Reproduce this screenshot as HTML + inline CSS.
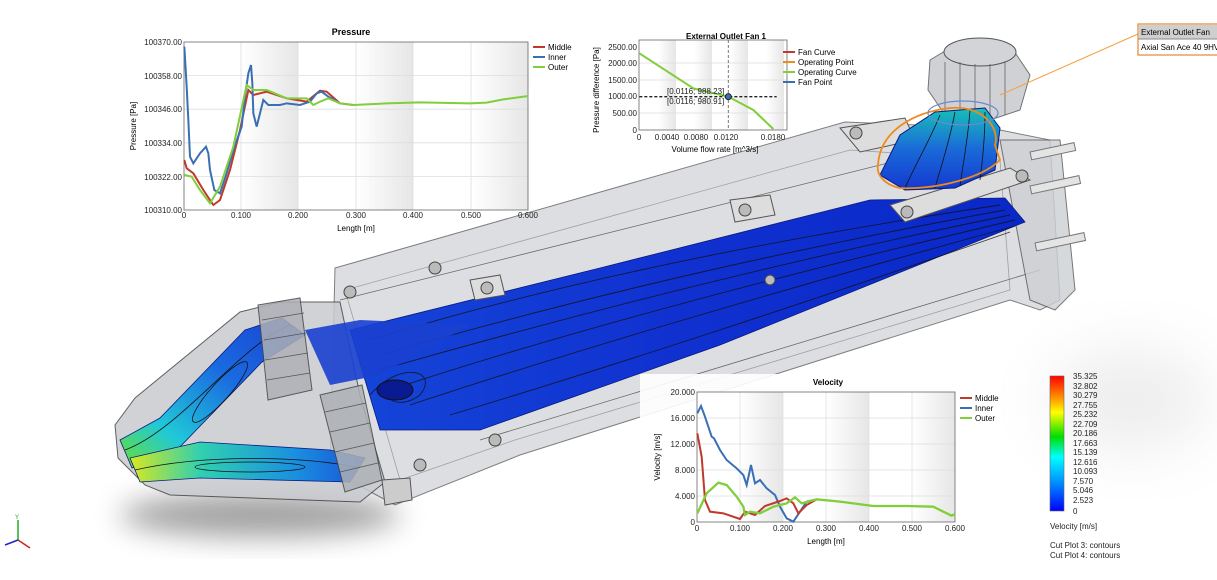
<!DOCTYPE html>
<html><head><meta charset="utf-8"><style>
html,body{margin:0;padding:0;background:#fff;}
body{width:1217px;height:575px;overflow:hidden;position:relative;font-family:"Liberation Sans",sans-serif;}
svg text{font-family:"Liberation Sans",sans-serif;}
</style></head><body>
<svg width="1217" height="575" viewBox="0 0 1217 575" xmlns="http://www.w3.org/2000/svg">
<defs>
<filter id="blur" x="-50%" y="-50%" width="200%" height="200%"><feGaussianBlur stdDeviation="14"/></filter>
<filter id="blur2" x="-50%" y="-50%" width="200%" height="200%"><feGaussianBlur stdDeviation="30"/></filter>
<linearGradient id="band" x1="0" x2="1" y1="0" y2="0"><stop offset="0" stop-color="#fff"/><stop offset="1" stop-color="#e6e6e6"/></linearGradient>
<linearGradient id="cbar" x1="0" x2="0" y1="0" y2="1">
<stop offset="0" stop-color="#f00"/><stop offset="0.15" stop-color="#f80"/><stop offset="0.27" stop-color="#ff0"/><stop offset="0.45" stop-color="#0d0"/><stop offset="0.6" stop-color="#0ff"/><stop offset="0.8" stop-color="#08f"/><stop offset="1" stop-color="#00f"/></linearGradient>
<linearGradient id="flow" x1="0" x2="1" y1="0" y2="0"><stop offset="0" stop-color="#1545d8"/><stop offset="0.5" stop-color="#1030d0"/><stop offset="1" stop-color="#0a28c8"/></linearGradient>
<linearGradient id="nose1" x1="0" x2="1" y1="1" y2="0"><stop offset="0" stop-color="#6be030"/><stop offset="0.25" stop-color="#20c8d8"/><stop offset="0.6" stop-color="#1a6ae0"/><stop offset="1" stop-color="#1840d0"/></linearGradient>
<linearGradient id="nose2" x1="0" x2="1" y1="0" y2="0"><stop offset="0" stop-color="#d8e820"/><stop offset="0.3" stop-color="#30d0b0"/><stop offset="0.7" stop-color="#1a90e0"/><stop offset="1" stop-color="#1850d8"/></linearGradient>
<linearGradient id="cone" x1="0" x2="0" y1="0" y2="1"><stop offset="0" stop-color="#18c0b8"/><stop offset="0.5" stop-color="#1a6ad8"/><stop offset="1" stop-color="#1438d0"/></linearGradient>
</defs>

<!-- shadows -->
<ellipse cx="260" cy="515" rx="140" ry="22" fill="#555" opacity="0.55" filter="url(#blur)"/>
<ellipse cx="1130" cy="400" rx="80" ry="50" fill="#ccc" opacity="0.35" filter="url(#blur2)"/>

<!-- main housing -->
<polygon points="335,268 845,122 990,128 1050,140 1060,300 1040,310 1010,300 520,455 395,505 330,470" fill="#d2d4d8" opacity="0.75" stroke="#555" stroke-width="1"/>
<polygon points="345,290 850,150 1000,160 1010,290 515,440 400,480" fill="#dcdee1" opacity="0.6" stroke="#777" stroke-width="0.8"/>
<line x1="340" y1="300" x2="1000" y2="135" stroke="#666" stroke-width="0.8"/>
<line x1="480" y1="440" x2="1040" y2="270" stroke="#666" stroke-width="0.8"/>
<polygon points="1000,140 1060,140 1075,290 1055,310 1030,300" fill="#cdd0d3" opacity="0.8" stroke="#555"/>
<!-- pins -->
<g stroke="#777" fill="#e4e4e4"><rect x="1030" y="152" width="45" height="8" transform="rotate(-12 1030 152)"/><rect x="1030" y="186" width="50" height="8" transform="rotate(-12 1030 186)"/><rect x="1035" y="243" width="50" height="8" transform="rotate(-12 1035 243)"/></g>
<!-- blue flow in housing -->
<polygon points="350,330 600,268 870,200 1005,198 1025,222 720,345 480,430 380,430" fill="url(#flow)" stroke="#0a1a80" stroke-width="0.8"/>
<g stroke="#111" stroke-width="0.9" fill="none" opacity="0.8">
<path d="M370,340 C500,300 700,250 1000,205"/><path d="M380,355 C520,315 720,262 1005,210"/><path d="M380,370 C520,330 740,270 1010,215"/><path d="M390,390 C540,340 760,280 1015,220"/><path d="M410,405 C560,355 780,290 1015,226"/><path d="M450,415 C600,370 800,305 1010,232"/><path d="M370,395 C400,360 440,370 420,395 C400,410 380,400 390,385"/>
</g>
<ellipse cx="395" cy="390" rx="18" ry="10" fill="#0a1a90" stroke="#111"/>
<!-- bolt plates -->
<g fill="#ddd" stroke="#555">
<polygon points="840,128 905,118 915,140 860,152"/><polygon points="890,205 1010,168 1030,180 905,222"/>
<polygon points="730,200 770,195 775,215 735,222"/>
<polygon points="470,280 500,275 505,295 475,300"/>
</g>
<g fill="#bbb" stroke="#444"><circle cx="856" cy="133" r="6"/><circle cx="907" cy="212" r="6"/><circle cx="1022" cy="176" r="6"/><circle cx="745" cy="210" r="6"/><circle cx="487" cy="288" r="6"/><circle cx="350" cy="292" r="6"/><circle cx="435" cy="268" r="6"/><circle cx="495" cy="440" r="6"/><circle cx="420" cy="465" r="6"/><circle cx="770" cy="280" r="5"/></g>
<!-- fan -->
<polygon points="930,60 960,42 1010,45 1030,75 1020,110 990,120 945,115 928,90" fill="#bfc2c7" opacity="0.75" stroke="#444"/>
<ellipse cx="980" cy="52" rx="36" ry="14" fill="#d2d4d8" stroke="#555"/>
<g stroke="#555" stroke-width="0.7"><line x1="945" y1="62" x2="945" y2="112"/><line x1="960" y1="62" x2="960" y2="116"/><line x1="975" y1="64" x2="975" y2="118"/><line x1="990" y1="64" x2="990" y2="118"/><line x1="1005" y1="62" x2="1005" y2="115"/></g>
<polygon points="880,175 900,135 935,112 985,108 1000,128 995,170 955,188 905,190" fill="url(#cone)" stroke="#0a1a80"/>
<g stroke="#111" stroke-width="0.8" fill="none"><path d="M940,115 C930,140 915,165 905,188"/><path d="M955,112 C950,140 940,170 935,188"/><path d="M970,110 C968,140 962,170 960,186"/><path d="M985,112 C985,140 982,165 980,180"/></g>
<path d="M878,165 C880,130 915,112 950,108 C985,105 1000,130 995,145 L1000,160 C980,180 930,190 900,188 C885,185 876,175 878,165 Z" fill="none" stroke="#f08a1a" stroke-width="1.8"/>
<ellipse cx="963" cy="113" rx="35" ry="12" fill="none" stroke="#6a8ad0" stroke-width="1.2"/>
<line x1="1000" y1="95" x2="1138" y2="34" stroke="#f5a040" stroke-width="1"/>

<!-- nose -->
<polygon points="115,425 135,398 240,312 280,302 340,302 360,395 385,482 360,502 170,495 145,485 118,458" fill="#c9cbd0" opacity="0.85" stroke="#444"/>
<polygon points="120,440 160,418 245,330 282,318 305,335 262,362 175,452 132,468" fill="url(#nose1)" stroke="#0a1a80" stroke-width="0.8"/>
<polygon points="130,458 200,442 330,450 365,458 350,482 200,478 140,482" fill="url(#nose2)" stroke="#0a1a80" stroke-width="0.8"/>
<g stroke="#111" fill="none" stroke-width="0.8"><ellipse cx="220" cy="392" rx="40" ry="9" transform="rotate(-48 220 392)"/><ellipse cx="250" cy="467" rx="55" ry="5"/><path d="M125,450 C180,430 240,345 290,325"/><path d="M135,470 C200,455 300,455 360,468"/></g>
<polygon points="305,330 360,320 470,325 380,375 330,385" fill="#1a40d0" opacity="0.9"/>
<!-- fan rings -->
<g fill="#aeb1b6" stroke="#444" opacity="0.85">
<polygon points="258,305 300,298 312,390 268,400"/>
<polygon points="320,395 362,385 382,480 345,492"/>
</g>
<g stroke="#555" stroke-width="0.7"><line x1="262" y1="320" x2="304" y2="313"/><line x1="264" y1="340" x2="306" y2="333"/><line x1="265" y1="360" x2="308" y2="353"/><line x1="267" y1="380" x2="310" y2="373"/><line x1="325" y1="412" x2="366" y2="403"/><line x1="330" y1="432" x2="370" y2="423"/><line x1="335" y1="452" x2="374" y2="443"/><line x1="340" y1="472" x2="378" y2="463"/></g>
<polygon points="382,480 410,478 412,500 385,505" fill="#ccc" stroke="#555"/>

<!-- triad -->
<g stroke-width="1.5"><line x1="18" y1="540" x2="18" y2="520" stroke="#2a2"/><line x1="18" y1="540" x2="5" y2="545" stroke="#22c"/><line x1="18" y1="540" x2="30" y2="548" stroke="#c22"/></g>
<text x="15" y="519" font-size="6" fill="#2a2">Y</text>

<!-- Pressure chart -->
<g>
<text x="351" y="35" font-size="9" font-weight="bold" text-anchor="middle">Pressure</text>
<rect x="184" y="42" width="344" height="168" fill="#fff"/>
<rect x="241" y="42" width="57" height="168" fill="url(#band)"/>
<rect x="356" y="42" width="57" height="168" fill="url(#band)"/>
<rect x="471" y="42" width="57" height="168" fill="url(#band)"/>
<g stroke="#ddd" stroke-width="0.8"><line x1="184" y1="75.6" x2="528" y2="75.6"/><line x1="184" y1="109.2" x2="528" y2="109.2"/><line x1="184" y1="142.8" x2="528" y2="142.8"/><line x1="184" y1="176.4" x2="528" y2="176.4"/><line x1="241" y1="42" x2="241" y2="210"/><line x1="298" y1="42" x2="298" y2="210"/><line x1="356" y1="42" x2="356" y2="210"/><line x1="413" y1="42" x2="413" y2="210"/><line x1="471" y1="42" x2="471" y2="210"/></g>
<rect x="184" y="42" width="344" height="168" fill="none" stroke="#666" stroke-width="0.8"/>
<g font-size="8" fill="#222" text-anchor="end"><text x="182" y="45">100370.00</text><text x="182" y="79">100358.00</text><text x="182" y="112">100346.00</text><text x="182" y="146">100334.00</text><text x="182" y="180">100322.00</text><text x="182" y="213">100310.00</text></g>
<g font-size="8" fill="#222" text-anchor="middle"><text x="184" y="218">0</text><text x="241" y="218">0.100</text><text x="298" y="218">0.200</text><text x="356" y="218">0.300</text><text x="413" y="218">0.400</text><text x="471" y="218">0.500</text><text x="528" y="218">0.600</text></g>
<text x="356" y="231" font-size="8" text-anchor="middle">Length [m]</text>
<text x="136" y="126" font-size="8" text-anchor="middle" transform="rotate(-90 136 126)">Pressure [Pa]</text>
<g transform="translate(120,20) scale(0.33333)" fill="none">
<polyline vector-effect="non-scaling-stroke" stroke="#c0392b" stroke-width="2" points="193,420 200,445 220,460 250,510 280,555 300,540 330,450 360,330 385,210 400,225 440,215 500,235 560,245 600,212 620,215 660,250 700,255"/>
<polyline vector-effect="non-scaling-stroke" stroke="#3a6fb5" stroke-width="2" points="193,80 200,200 205,300 210,410 220,430 240,400 258,380 265,400 270,450 283,510 300,520 320,460 340,390 365,320 375,230 385,160 393,135 397,190 400,280 410,320 420,280 430,240 445,255 480,255 500,250 540,255 570,245 590,220 605,215 625,230 660,250"/>
<polyline vector-effect="non-scaling-stroke" stroke="#7fce3a" stroke-width="2" points="193,465 215,470 240,510 270,550 300,500 340,380 380,195 400,210 440,210 500,235 560,235 580,255 600,245 625,235 660,250 700,255 800,250 900,247 1050,250 1100,248 1150,238 1225,228"/>
</g>
<g font-size="8"><line x1="533" y1="47" x2="545" y2="47" stroke="#c0392b" stroke-width="2"/><text x="548" y="50">Middle</text><line x1="533" y1="57" x2="545" y2="57" stroke="#3a6fb5" stroke-width="2"/><text x="548" y="60">Inner</text><line x1="533" y1="67" x2="545" y2="67" stroke="#7fce3a" stroke-width="2"/><text x="548" y="70">Outer</text></g>
</g>

<!-- Fan chart -->
<g>
<text x="726" y="39" font-size="8" font-weight="bold" text-anchor="middle">External Outlet Fan 1</text>
<rect x="639" y="40" width="148" height="90" fill="#fff"/>
<rect x="658" y="40" width="18" height="90" fill="url(#band)"/>
<rect x="694" y="40" width="18" height="90" fill="url(#band)"/>
<rect x="730" y="40" width="18" height="90" fill="url(#band)"/>
<rect x="766" y="40" width="18" height="90" fill="url(#band)"/>
<g stroke="#ddd" stroke-width="0.7"><line x1="639" y1="63" x2="787" y2="63"/><line x1="639" y1="80" x2="787" y2="80"/><line x1="639" y1="113" x2="787" y2="113"/></g>
<rect x="639" y="40" width="148" height="90" fill="none" stroke="#666" stroke-width="0.8"/>
<g transform="translate(590,25) scale(0.33333)" fill="none">
<line x1="148" y1="215" x2="560" y2="215" stroke="#222" stroke-width="1.3" stroke-dasharray="3 2" vector-effect="non-scaling-stroke"/>
<line x1="415" y1="45" x2="415" y2="315" stroke="#777" stroke-width="1" stroke-dasharray="3 2" vector-effect="non-scaling-stroke"/>
<polyline points="148,85 310,190 415,215 490,255 550,312" stroke="#7fce3a" stroke-width="2" vector-effect="non-scaling-stroke"/>
<circle cx="415" cy="215" r="9" fill="#3a6fb5" stroke="#222" stroke-width="1" vector-effect="non-scaling-stroke"/>
</g>
<g font-size="8" fill="#222"><text x="667" y="94">[0.0116; 988.23]</text><text x="667" y="104">[0.0116; 980.91]</text></g>
<g font-size="8" fill="#222" text-anchor="end"><text x="637" y="50">2500.00</text><text x="637" y="66">2000.00</text><text x="637" y="83">1500.00</text><text x="637" y="99">1000.00</text><text x="637" y="116">500.00</text><text x="637" y="133">0</text></g>
<g font-size="8" fill="#222" text-anchor="middle"><text x="639" y="140">0</text><text x="667" y="140">0.0040</text><text x="696" y="140">0.0080</text><text x="726" y="140">0.0120</text><text x="773" y="140">0.0180</text></g>
<text x="715" y="152" font-size="8" text-anchor="middle">Volume flow rate [m^3/s]</text>
<text x="599" y="90" font-size="8" text-anchor="middle" transform="rotate(-90 599 90)">Pressure difference [Pa]</text>
<g font-size="8"><line x1="783" y1="52" x2="795" y2="52" stroke="#c0392b" stroke-width="2"/><text x="798" y="55">Fan Curve</text><line x1="783" y1="62" x2="795" y2="62" stroke="#f08a1a" stroke-width="2"/><text x="798" y="65">Operating Point</text><line x1="783" y1="72" x2="795" y2="72" stroke="#7fce3a" stroke-width="2"/><text x="798" y="75">Operating Curve</text><line x1="783" y1="82" x2="795" y2="82" stroke="#3a6fb5" stroke-width="2"/><text x="798" y="85">Fan Point</text></g>
</g>

<!-- Velocity chart -->
<g>
<rect x="640" y="374" width="330" height="175" fill="#fff" opacity="0.9"/>
<text x="828" y="385" font-size="8" font-weight="bold" text-anchor="middle">Velocity</text>
<rect x="697" y="392" width="258" height="130" fill="#fff"/>
<rect x="740" y="392" width="43" height="130" fill="url(#band)"/>
<rect x="826" y="392" width="43" height="130" fill="url(#band)"/>
<rect x="912" y="392" width="43" height="130" fill="url(#band)"/>
<g stroke="#ddd" stroke-width="0.7"><line x1="697" y1="418" x2="955" y2="418"/><line x1="697" y1="444" x2="955" y2="444"/><line x1="697" y1="470" x2="955" y2="470"/><line x1="697" y1="496" x2="955" y2="496"/><line x1="740" y1="392" x2="740" y2="522"/><line x1="783" y1="392" x2="783" y2="522"/><line x1="826" y1="392" x2="826" y2="522"/><line x1="869" y1="392" x2="869" y2="522"/><line x1="912" y1="392" x2="912" y2="522"/></g>
<rect x="697" y="392" width="258" height="130" fill="none" stroke="#666" stroke-width="0.8"/>
<g transform="translate(640,370) scale(0.33333)" fill="none">
<polyline vector-effect="non-scaling-stroke" stroke="#3a6fb5" stroke-width="2" points="172,130 183,108 195,140 215,200 222,205 240,240 260,270 290,295 310,315 320,345 333,285 345,340 360,330 380,355 405,375 420,410 440,445 460,455 480,425 500,395 530,388"/>
<polyline vector-effect="non-scaling-stroke" stroke="#c0392b" stroke-width="2" points="172,190 185,260 195,390 210,425 250,430 300,447 315,425 345,435 375,408 420,393 440,385 460,400 475,430 500,405 530,388"/>
<polyline vector-effect="non-scaling-stroke" stroke="#7fce3a" stroke-width="2.3" points="172,430 200,370 235,338 260,345 290,380 310,410 315,435 330,425 360,430 400,410 440,400 465,382 485,400 530,388 600,395 700,408 800,408 880,410 910,425 935,437 945,432"/>
</g>
<g font-size="8" fill="#222" text-anchor="end"><text x="695" y="395">20.000</text><text x="695" y="421">16.000</text><text x="695" y="447">12.000</text><text x="695" y="473">8.000</text><text x="695" y="499">4.000</text><text x="695" y="525">0</text></g>
<g font-size="8" fill="#222" text-anchor="middle"><text x="697" y="531">0</text><text x="740" y="531">0.100</text><text x="783" y="531">0.200</text><text x="826" y="531">0.300</text><text x="869" y="531">0.400</text><text x="912" y="531">0.500</text><text x="955" y="531">0.600</text></g>
<text x="826" y="544" font-size="8" text-anchor="middle">Length [m]</text>
<text x="660" y="457" font-size="8" text-anchor="middle" transform="rotate(-90 660 457)">Velocity [m/s]</text>
<g font-size="8"><line x1="960" y1="398" x2="972" y2="398" stroke="#c0392b" stroke-width="2"/><text x="975" y="401">Middle</text><line x1="960" y1="408" x2="972" y2="408" stroke="#3a6fb5" stroke-width="2"/><text x="975" y="411">Inner</text><line x1="960" y1="418" x2="972" y2="418" stroke="#7fce3a" stroke-width="2"/><text x="975" y="421">Outer</text></g>
</g>

<!-- color legend -->
<rect x="1050" y="376" width="14" height="135" fill="url(#cbar)" stroke="#666" stroke-width="0.6"/>
<g font-size="8" fill="#222">
<text x="1073" y="379">35.325</text><text x="1073" y="389">32.802</text><text x="1073" y="398">30.279</text><text x="1073" y="408">27.755</text><text x="1073" y="417">25.232</text><text x="1073" y="427">22.709</text><text x="1073" y="436">20.186</text><text x="1073" y="446">17.663</text><text x="1073" y="455">15.139</text><text x="1073" y="465">12.616</text><text x="1073" y="474">10.093</text><text x="1073" y="484">7.570</text><text x="1073" y="493">5.046</text><text x="1073" y="503">2.523</text><text x="1073" y="514">0</text>
<text x="1050" y="529">Velocity [m/s]</text>
<text x="1050" y="548">Cut Plot 3: contours</text>
<text x="1050" y="558">Cut Plot 4: contours</text>
</g>

<!-- tooltip -->
<rect x="1138" y="24" width="82" height="31" fill="#fff" stroke="#e08a30" stroke-width="1.2"/>
<rect x="1139" y="25" width="80" height="14" fill="#cfcfcf"/>
<line x1="1138" y1="39" x2="1220" y2="39" stroke="#888"/>
<text x="1141" y="35" font-size="8">External Outlet Fan</text>
<text x="1141" y="50" font-size="8">Axial San Ace 40 9HV</text>
</svg>
</body></html>
